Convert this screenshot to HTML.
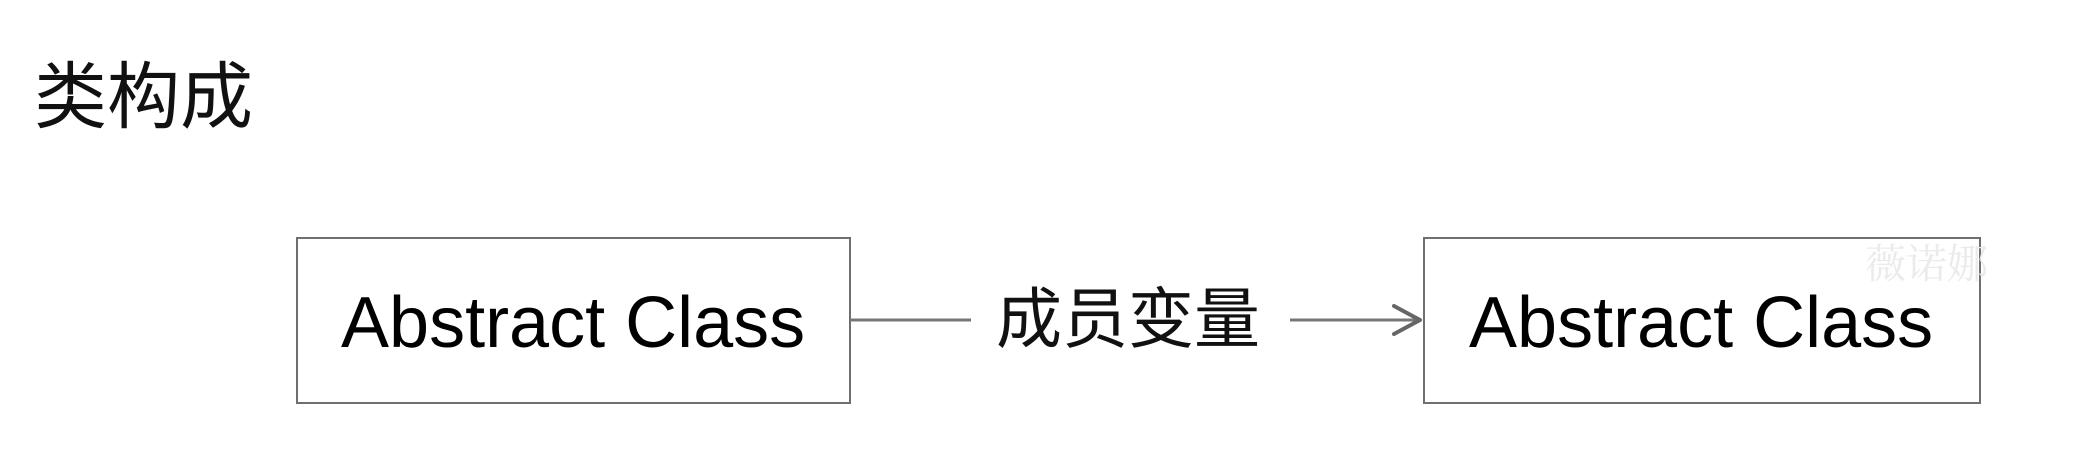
<!DOCTYPE html>
<html><head><meta charset="utf-8"><style>
html,body{margin:0;padding:0;background:#fff;width:2074px;height:466px;overflow:hidden;position:relative;font-family:"Liberation Sans","Noto Sans CJK SC",sans-serif;}
.t{position:absolute;white-space:nowrap;line-height:1;}
.box{position:absolute;border:2px solid #6f6f6f;box-sizing:border-box;}
</style></head><body>
<div class="t" style="left:34px;top:61px;font-size:73px;color:#111;">类构成</div>
<div class="box" style="left:296px;top:237px;width:555px;height:167px;"></div>
<div class="box" style="left:1423px;top:237px;width:558px;height:167px;"></div>
<div class="t" style="left:341px;top:287px;font-size:72px;color:#000;">Abstract Class</div>
<div class="t" style="left:1469px;top:287px;font-size:72px;color:#000;">Abstract Class</div>
<div class="t" style="left:996px;top:286px;font-size:66px;color:#111;">成员变量</div>
<div class="t" style="left:1865px;top:240px;font-size:41px;color:#ebebeb;font-family:'Noto Serif CJK SC',serif;">薇诺娜</div>
<svg style="position:absolute;left:0;top:0" width="2074" height="466">
<line x1="850" y1="320" x2="971" y2="320" stroke="#777" stroke-width="3"/>
<line x1="1290" y1="320" x2="1421" y2="320" stroke="#777" stroke-width="3"/>
<polyline points="1394,306 1420,320 1394,334" fill="none" stroke="#666" stroke-width="4" stroke-linecap="round" stroke-linejoin="round"/>
</svg>
</body></html>
